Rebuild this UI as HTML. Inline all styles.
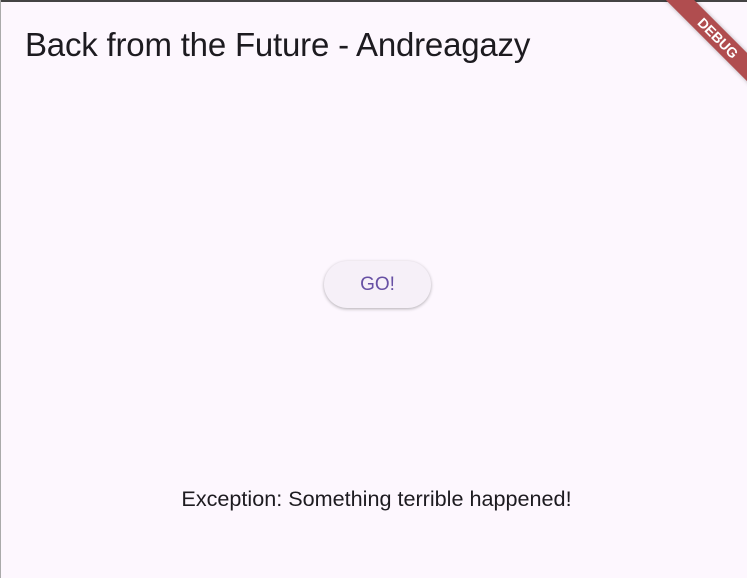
<!DOCTYPE html>
<html><head><style>
html,body{margin:0;padding:0}
body{width:747px;height:578px;background:#fdf7fe;position:relative;overflow:hidden;font-family:"Liberation Sans",Roboto,sans-serif;}
.top{position:absolute;left:0;top:0;width:747px;height:2px;background:#444}
.left{position:absolute;left:0;top:0;width:1px;height:578px;background:#aaa}
.title{position:absolute;left:25px;top:26px;font-size:33px;color:#1d1b20;white-space:nowrap;letter-spacing:-0.2px}
.btn{position:absolute;left:324px;top:261px;width:107px;height:47px;border-radius:24px;background:#f6f0f8;box-shadow:0 1px 3px rgba(0,0,0,.3);color:#6750a4;font-size:19px;display:flex;align-items:center;justify-content:center}
.exc{position:absolute;left:3px;width:747px;top:486px;text-align:center;font-size:21.6px;color:#1d1b20}
.banner{position:absolute;left:643px;top:28px;width:150px;height:20px;background:#b04d4f;transform:rotate(45deg);color:#fff;font-weight:bold;font-size:14px;text-align:center;line-height:20px;box-shadow:0 0 4px rgba(0,0,0,.3)}
</style></head><body>
<div class="top"></div><div class="left"></div>
<div class="title">Back from the Future - Andreagazy</div>
<div class="btn">GO!</div>
<div class="exc">Exception: Something terrible happened!</div>
<div class="banner">DEBUG</div>
</body></html>
